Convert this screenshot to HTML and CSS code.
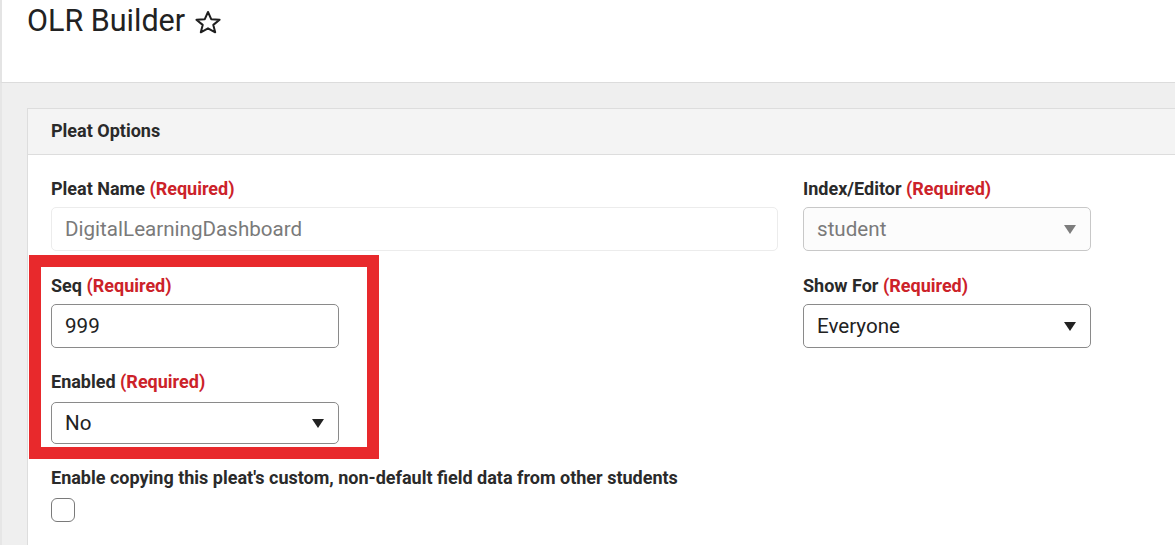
FILE: index.html
```html
<!DOCTYPE html>
<html lang="en">
<head>
<meta charset="utf-8">
<title>OLR Builder</title>
<link rel="stylesheet" href="styles.css">
</head>
<body>
<div class="page">
  <header class="page-header">
    <h1 class="title">OLR Builder
      <svg class="star" viewBox="0 0 28 24" width="28" height="24" aria-hidden="true">
        <path d="M14 2 L17.2 9.2 L25.6 9.8 L19.3 14.9 L21.2 22.3 L14 18.3 L6.8 22.3 L8.7 14.9 L2.4 9.8 L10.8 9.2 Z" fill="none" stroke="#1f1f1f" stroke-width="2" stroke-linejoin="round"/>
      </svg>
    </h1>
  </header>
  <main class="main">
    <section class="card">
      <div class="card-header">Pleat Options</div>
      <div class="card-body">
        <div class="col-left">
          <div class="field">
            <div class="label">Pleat Name <span class="req">(Required)</span></div>
            <div class="control control-light disabled-text">DigitalLearningDashboard</div>
          </div>
          <div class="highlight">
            <div class="field">
              <div class="label">Seq <span class="req">(Required)</span></div>
              <div class="control control-short">999</div>
            </div>
            <div class="field field-gap">
              <div class="label">Enabled <span class="req">(Required)</span></div>
              <div class="control control-short select select-mt">No<span class="arrow"></span></div>
            </div>
          </div>
          <div class="field field-copy">
            <div class="label">Enable copying this pleat's custom, non-default field data from other students</div>
            <div class="checkbox"></div>
          </div>
        </div>
        <div class="col-right">
          <div class="field">
            <div class="label">Index/Editor <span class="req">(Required)</span></div>
            <div class="control select select-disabled disabled-text">student<span class="arrow arrow-gray"></span></div>
          </div>
          <div class="field field-show">
            <div class="label">Show For <span class="req">(Required)</span></div>
            <div class="control select">Everyone<span class="arrow"></span></div>
          </div>
        </div>
      </div>
    </section>
  </main>
</div>
</body>
</html>
```

FILE: styles.css
```css
html, body {
  margin: 0;
  padding: 0;
  height: 100%;
  overflow: hidden;
}
body {
  font-family: Roboto, "Liberation Sans", Arial, sans-serif;
  color: #222;
  background: #eeeeee;
}
.page {
  display: flex;
  flex-direction: column;
  height: 545px;
}
.page-header {
  height: 82px;
  background: #fff;
  border-left: 2px solid #e4e4e4;
  border-bottom: 1px solid #dcdcdc;
  padding-left: 25px;
  box-sizing: content-box;
  flex: none;
}
.title {
  margin: 3px 0 0 0;
  font-size: 30.5px;
  line-height: 36px;
  font-weight: 400;
  color: #222;
  display: flex;
  align-items: center;
}
.star {
  margin-left: 9px;
  margin-top: 2px;
}
.main {
  flex: 1;
  background: #efefef;
  border-left: 2px solid #e6e6e6;
  padding: 25px 0 0 25px;
  overflow: hidden;
}
.card {
  background: #fff;
  border: 1px solid #dddddd;
  border-right: none;
  margin-right: -20px;
  height: 100%;
}
.card-header {
  height: 45px;
  background: #f4f4f4;
  border-bottom: 1px solid #dddddd;
  padding-left: 23px;
  font-size: 18px;
  font-weight: 700;
  line-height: 44px;
  color: #2a2a2a;
}
.card-body {
  display: flex;
  gap: 25px;
  padding: 24px 0 0 23px;
}
.col-left {
  width: 727px;
  display: flex;
  flex-direction: column;
}
.col-right {
  width: 288px;
  display: flex;
  flex-direction: column;
}
.label {
  font-size: 18px;
  line-height: 20px;
  font-weight: 700;
  color: #2a2a2a;
  margin-bottom: 8px;
  white-space: nowrap;
}
.req {
  color: #cc2229;
}
.control {
  height: 44px;
  box-sizing: border-box;
  border: 1px solid #8a8a8a;
  border-radius: 5px;
  padding: 0 13px;
  font-size: 20.6px;
  line-height: 42px;
  color: #222;
  position: relative;
  background: #fff;
}
.control-light {
  border-color: #ececec;
}
.disabled-text {
  color: #7a7a7a;
}
.select-disabled {
  border-color: #c8c8c8;
  background: #fcfcfc;
}
.control-short {
  width: 288px;
}
.select-mt {
  margin-top: 10px;
  height: 42px;
  line-height: 40px;
}
.arrow {
  position: absolute;
  right: 14px;
  top: 50%;
  margin-top: -4px;
  width: 0;
  height: 0;
  border-left: 6px solid transparent;
  border-right: 6px solid transparent;
  border-top: 9px solid #222;
}
.arrow-gray {
  border-top-color: #7d7d7d;
}
.highlight {
  box-sizing: border-box;
  width: 350px;
  margin: 4px 0 0 -22px;
  border: 12px solid #e8292c;
  padding: 9px 0 3px 10px;
}
.field-gap {
  margin-top: 24px;
}
.field-copy {
  margin-top: 9px;
}
.field-show {
  margin-top: 25px;
}
.checkbox {
  width: 24px;
  height: 24px;
  box-sizing: border-box;
  border: 1.5px solid #7a7a7a;
  border-radius: 6px;
  margin-top: 10px;
}
```
